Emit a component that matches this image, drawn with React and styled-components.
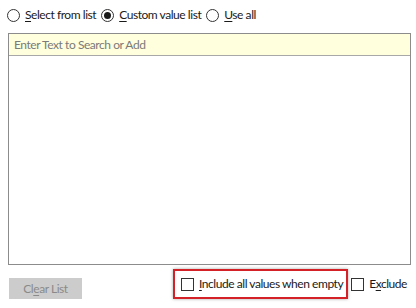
import React from 'react'
import styled, { createGlobalStyle } from 'styled-components'

const Global = createGlobalStyle`
  html, body {
    margin: 0;
    padding: 0;
    background: #ffffff;
  }
  body {
    font-family: Lato, "Liberation Sans", sans-serif;
    font-size: 12px;
    letter-spacing: -0.45px;
    color: #1a1a1a;
  }
`

export default function App() {
  return (
    <Panel>
      <Global />
      <RadioRow>
        <Option>
          <Radio />
          <span><U>S</U>elect from list</span>
        </Option>
        <Option>
          <Radio checked />
          <span><U>C</U>ustom value list</span>
        </Option>
        <Option>
          <Radio />
          <span><U>U</U>se all</span>
        </Option>
      </RadioRow>

      <ListBox>
        <SearchInput placeholder="Enter Text to Search or Add" />
        <ListArea />
      </ListBox>

      <Footer>
        <ClearButton disabled>
          Cl<U>e</U>ar List
        </ClearButton>
        <RightGroup>
          <Highlight>
            <Option>
              <Check />
              <span><U>I</U>nclude all values when empty</span>
            </Option>
          </Highlight>
          <Option>
            <Check />
            <span>E<U>x</U>clude</span>
          </Option>
        </RightGroup>
      </Footer>
    </Panel>
  )
}

const Panel = styled.div`
  width: 416px;
  height: 308px;
  box-sizing: border-box;
  padding: 0 5px 0 8px;
  display: flex;
  flex-direction: column;
`

const RadioRow = styled.div`
  display: flex;
  align-items: center;
  height: 30px;
  margin-left: -1px;
  gap: 5px;
`

const Option = styled.label`
  display: flex;
  align-items: center;
  gap: 5px;
  white-space: nowrap;
  line-height: 16px;
`

const U = styled.span`
  text-decoration: underline;
  text-underline-offset: 2px;
`

const Radio = styled.span`
  width: 13px;
  height: 13px;
  box-sizing: border-box;
  border: 1px solid #333;
  border-radius: 50%;
  background: #fff;
  position: relative;
  flex: none;

  &::after {
    content: '';
    display: ${p => (p.checked ? 'block' : 'none')};
    position: absolute;
    left: 2px;
    top: 2px;
    width: 7px;
    height: 7px;
    border-radius: 50%;
    background: #1a1a1a;
  }
`

const Check = styled.span`
  width: 13px;
  height: 13px;
  box-sizing: border-box;
  border: 1px solid #333;
  background: #fff;
  flex: none;
`

const ListBox = styled.div`
  margin-top: 3px;
  height: 232px;
  box-sizing: border-box;
  border: 1px solid #8c8c8c;
  display: flex;
  flex-direction: column;
`

const SearchInput = styled.input`
  height: 22px;
  box-sizing: border-box;
  border: none;
  border-bottom: 1px solid #a8a8a8;
  background: #ffffdd;
  padding: 0 5px;
  font-family: inherit;
  font-size: 12px;
  letter-spacing: inherit;
  outline: none;

  &::placeholder {
    color: #7a7a7a;
  }
`

const ListArea = styled.div`
  flex: 1;
  background: #fff;
`

const Footer = styled.div`
  display: flex;
  align-items: center;
  margin-top: 4px;
  height: 30px;
`

const ClearButton = styled.button`
  margin-left: 1px;
  width: 73px;
  height: 21px;
  margin-top: 8px;
  border: none;
  background: #cccccc;
  color: #8a8a8a;
  font-family: inherit;
  font-size: 12px;
  letter-spacing: inherit;
  padding: 0;
`

const RightGroup = styled.div`
  margin-left: auto;
  display: flex;
  align-items: center;
  gap: 3px;
  margin-right: 4px;
`

const Highlight = styled.div`
  border: 2px solid #d42027;
  box-shadow: 0 0 3px rgba(0, 0, 0, 0.35);
  height: 30px;
  box-sizing: border-box;
  padding: 0 3px 0 6px;
  display: flex;
  align-items: center;
`
